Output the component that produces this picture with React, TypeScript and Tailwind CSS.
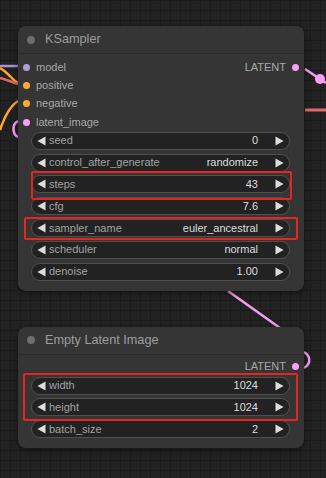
import React from "react";

type Slot = { name: string; color: string };
type Widget = { label: string; value: string };

const KSAMPLER_INPUTS: Slot[] = [
  { name: "model", color: "#b19cd9" },
  { name: "positive", color: "#ffa931" },
  { name: "negative", color: "#ffa931" },
  { name: "latent_image", color: "#ff9cf9" },
];

const KSAMPLER_WIDGETS: Widget[] = [
  { label: "seed", value: "0" },
  { label: "control_after_generate", value: "randomize" },
  { label: "steps", value: "43" },
  { label: "cfg", value: "7.6" },
  { label: "sampler_name", value: "euler_ancestral" },
  { label: "scheduler", value: "normal" },
  { label: "denoise", value: "1.00" },
];

const LATENT_WIDGETS: Widget[] = [
  { label: "width", value: "1024" },
  { label: "height", value: "1024" },
  { label: "batch_size", value: "2" },
];

function Arrow({ dir }: { dir: "left" | "right" }) {
  return (
    <svg width="9" height="10" viewBox="0 0 9 10" className="shrink-0">
      {dir === "left" ? (
        <path d="M0.5 5 L8.5 0.5 L8.5 9.5 Z" fill="#dddddd" />
      ) : (
        <path d="M8.5 5 L0.5 0.5 L0.5 9.5 Z" fill="#dddddd" />
      )}
    </svg>
  );
}

function WidgetRow({ w }: { w: Widget }) {
  return (
    <div className="flex items-center h-[18px] mx-[13px] mr-[14px] rounded-full border border-[#4f4f4f] bg-[#222222] px-[5px]">
      <Arrow dir="left" />
      <span className="ml-[3px] text-[#a3a3a3]">{w.label}</span>
      <span className="ml-auto text-[#dddddd]">{w.value}</span>
      <span className="ml-[17px]">
        <Arrow dir="right" />
      </span>
    </div>
  );
}

function Title({ text }: { text: string }) {
  return (
    <div className="flex items-center h-[28px] pl-[9px] border-b border-[#2c2c2c]">
      <span className="w-[8px] h-[8px] rounded-full bg-[#6e6e6e]" />
      <span className="ml-[10px] text-[12.7px] text-[#9d9d9d]">{text}</span>
    </div>
  );
}

function LatentOut() {
  return (
    <div className="flex items-center justify-end h-[18.3px] pr-[5px] text-[#a8a8a8]">
      LATENT
      <span className="ml-[6px] w-[7px] h-[7px] rounded-full bg-[#ff9cf9]" />
    </div>
  );
}

export default function App() {
  return (
    <div
      className="relative w-[326px] h-[478px] overflow-hidden bg-[#222222] bg-[linear-gradient(to_right,#1b1b1b_1px,transparent_1px),linear-gradient(to_bottom,#1b1b1b_1px,transparent_1px)] bg-[size:10px_10px] text-[11px] leading-none"
      style={{ fontFamily: '"Liberation Sans", Arial, sans-serif' }}
    >
      {/* wires */}
      <svg className="absolute inset-0" width="326" height="478" viewBox="0 0 326 478" fill="none">
        <path d="M0 66 L18 66" stroke="#a893d4" strokeWidth="2.5" />
        <path d="M0 68 C8 72 12 80 18 83" stroke="#ffa931" strokeWidth="2.5" />
        <path d="M0 78 C8 80 12 82 18 84" stroke="#e06a6a" strokeWidth="2.5" />
        <path d="M0 130 C4 118 10 106 18 101" stroke="#ffa931" strokeWidth="2.5" />
        <path d="M18 121 C12 124 12 134 18 137" stroke="#ff9cf9" strokeWidth="2.5" />
        <path d="M305 69 L326 83" stroke="#f39cf0" strokeWidth="2.5" />
        <circle cx="320" cy="79" r="5" fill="#ff9cf9" />
        <path d="M305 110 L326 110" stroke="#e06a6a" strokeWidth="3" />
        <path d="M228 291 L280 328" stroke="#f39cf0" strokeWidth="2.5" />
        <path d="M304 352 C311 356 311 364 304 368" stroke="#f39cf0" strokeWidth="2.5" />
      </svg>

      <div className="relative flex flex-col pt-[26px] pl-[18px] gap-[36px]">
        {/* KSampler */}
        <div className="w-[286px] rounded-[8px] bg-[#353535] shadow-[0_2px_6px_rgba(0,0,0,0.5)] pb-[10px]">
          <Title text="KSampler" />
          <div className="relative pt-[4px]">
            {KSAMPLER_INPUTS.map((s) => (
              <div key={s.name} className="flex items-center h-[18.3px] pl-[4.5px] text-[#a8a8a8]">
                <span className="w-[7px] h-[7px] rounded-full" style={{ backgroundColor: s.color }} />
                <span className="ml-[6.5px]">{s.name}</span>
              </div>
            ))}
            <div className="absolute top-[4px] right-0 left-0">
              <LatentOut />
            </div>
          </div>
          <div className="flex flex-col gap-[3.8px] mt-[0.7px]">
            {KSAMPLER_WIDGETS.map((w) => (
              <WidgetRow key={w.label} w={w} />
            ))}
          </div>
        </div>

        {/* Empty Latent Image */}
        <div className="w-[286px] rounded-[8px] bg-[#353535] shadow-[0_2px_6px_rgba(0,0,0,0.5)] pb-[10px]">
          <Title text="Empty Latent Image" />
          <div className="pt-[3px]">
            <LatentOut />
          </div>
          <div className="flex flex-col gap-[3.8px] mt-[0.7px]">
            {LATENT_WIDGETS.map((w) => (
              <WidgetRow key={w.label} w={w} />
            ))}
          </div>
        </div>
      </div>

      {/* red highlight annotations */}
      <div className="absolute left-[31px] top-[171px] w-[261px] h-[29px] border-[2.5px] border-[#e3261f] rounded-[2px]" />
      <div className="absolute left-[24px] top-[217px] w-[274px] h-[23px] border-[2.5px] border-[#e3261f] rounded-[2px]" />
      <div className="absolute left-[23px] top-[373px] w-[275px] h-[48px] border-[2.5px] border-[#e3261f] rounded-[2px]" />
    </div>
  );
}
